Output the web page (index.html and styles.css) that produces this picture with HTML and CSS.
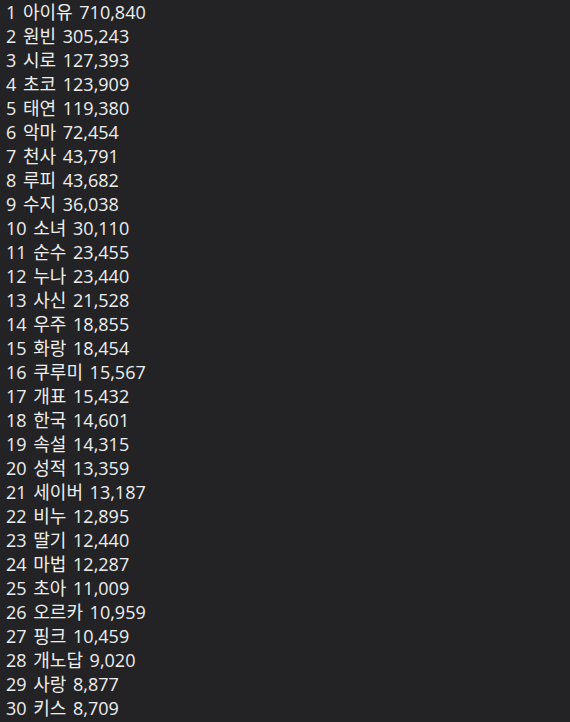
FILE: index.html
```html
<!DOCTYPE html>
<html lang="ko">
<head>
<meta charset="utf-8">
<link rel="stylesheet" href="styles.css">
</head>
<body>
<div class="list">
<div class="row">1 아이유 710,840</div>
<div class="row">2 원빈 305,243</div>
<div class="row">3 시로 127,393</div>
<div class="row">4 초코 123,909</div>
<div class="row">5 태연 119,380</div>
<div class="row">6 악마 72,454</div>
<div class="row">7 천사 43,791</div>
<div class="row">8 루피 43,682</div>
<div class="row">9 수지 36,038</div>
<div class="row">10 소녀 30,110</div>
<div class="row">11 순수 23,455</div>
<div class="row">12 누나 23,440</div>
<div class="row">13 사신 21,528</div>
<div class="row">14 우주 18,855</div>
<div class="row">15 화랑 18,454</div>
<div class="row">16 쿠루미 15,567</div>
<div class="row">17 개표 15,432</div>
<div class="row">18 한국 14,601</div>
<div class="row">19 속설 14,315</div>
<div class="row">20 성적 13,359</div>
<div class="row">21 세이버 13,187</div>
<div class="row">22 비누 12,895</div>
<div class="row">23 딸기 12,440</div>
<div class="row">24 마법 12,287</div>
<div class="row">25 초아 11,009</div>
<div class="row">26 오르카 10,959</div>
<div class="row">27 핑크 10,459</div>
<div class="row">28 개노답 9,020</div>
<div class="row">29 사랑 8,877</div>
<div class="row">30 키스 8,709</div>
</div>
</body>
</html>
```
FILE: styles.css
```css
html, body {
  margin: 0;
  background: #232325;
}
body {
  color: #eeeeee;
  font-family: "Open Sans", "Noto Sans CJK KR", sans-serif;
  font-size: 18px;
}
.list {
  padding: 0 0 0 6px;
}
.row {
  height: 24px;
  line-height: 24px;
  white-space: nowrap;
  word-spacing: 2px;
}
```
